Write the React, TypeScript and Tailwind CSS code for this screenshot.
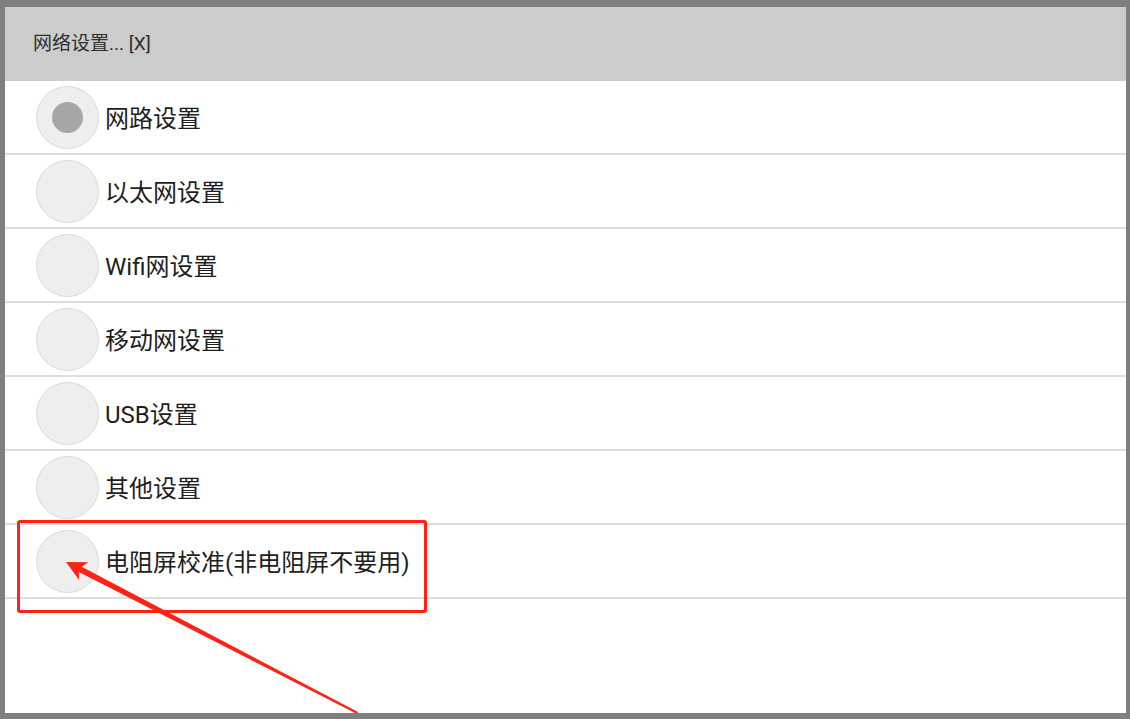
import React from "react";

const items = [
  "网路设置",
  "以太网设置",
  "Wifi网设置",
  "移动网设置",
  "USB设置",
  "其他设置",
  "电阻屏校准(非电阻屏不要用)",
];

export default function App() {
  return (
    <div
      className="relative w-[1130px] h-[719px] overflow-hidden bg-[#7f7f7f] pt-[7px] pl-[5px] pr-[4px] pb-[6px]"
      style={{ fontFamily: 'Roboto, "Noto Sans CJK SC", sans-serif' }}
    >
      <div className="flex h-full w-full flex-col bg-white">
        <div className="flex h-[74px] shrink-0 items-center bg-[#cccccc] pl-[28px] text-[19px] text-[#2e2e2e]">
          网络设置... [X]
        </div>
        {items.map((label, i) => (
          <div
            key={label}
            className="flex h-[74px] shrink-0 items-center border-b-2 border-[#dddddd] pl-[31px] pt-[1px]"
          >
            <div className="flex h-[63px] w-[63px] shrink-0 items-center justify-center rounded-full border border-[#dadada] bg-[#eeeeee]">
              {i === 0 && <div className="h-[31px] w-[31px] rounded-full bg-[#a6a6a6]" />}
            </div>
            <span className="ml-[6px] mt-[3px] text-[24px] leading-none text-[#1e1e1e]">{label}</span>
          </div>
        ))}
        <div className="flex-1" />
      </div>

      <div className="absolute left-[17px] top-[520px] h-[93px] w-[410px] rounded-[3px] border-[3px] border-[#ff2216]" />

      <svg className="absolute left-0 top-0" width="1130" height="713" viewBox="0 0 1130 713">
        <polygon
          fill="#ff2216"
          points="66,562 88.3,562.3 81.6,566.7 358,712.1 357,714 78.8,572.1 79.1,580.1"
        />
      </svg>
    </div>
  );
}
